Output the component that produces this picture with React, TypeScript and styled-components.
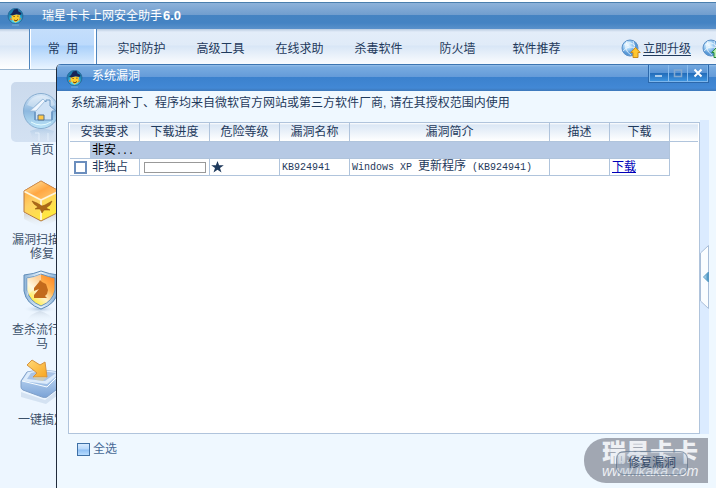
import React from "react";
import styled, { createGlobalStyle } from "styled-components";

const cjk = '"Liberation Sans", "Noto Sans CJK SC", sans-serif';
const ink = "#1f3a5c";
const line = "#b0c4dc";

const GlobalStyle = createGlobalStyle`
  * { box-sizing: border-box; }
  body { margin: 0; background: #fff; font: 12px/14px ${cjk}; color: ${ink}; overflow: hidden; }
  button, input { font: inherit; color: inherit; margin: 0; padding: 0; }
`;

const Page = styled.div`
  position: relative;
  min-height: 100vh;
  padding-top: 2px;
  overflow: hidden;
  display: flex;
  flex-direction: column;
  svg { display: block; flex: none; }
`;

const TitleBar = styled.header`
  height: 27px;
  display: flex;
  align-items: center;
  gap: 18px;
  padding-left: 7px;
  color: #fff;
  border-top: 1px solid #4a7fae;
  background: linear-gradient(#8db2da 0, #709dce 12px, #4583c2 12px, #4483c3 20px, #5a91cb 100%);
`;

const TitleText = styled.h1`
  margin: 0;
  font-size: 12px;
  line-height: 20px;
  font-weight: 400;
  b { font-size: 13px; padding-left: 1px; }
`;

const Nav = styled.nav`
  height: 41px;
  flex: none;
  display: flex;
  align-items: stretch;
  padding-left: 29px;
  border-bottom: 1px solid #9ab6d0;
  background: linear-gradient(#b9cbe0 0, #e3edf9 3px, #e0ebf8 16px, #d8e6f6 17px, #f1f6fc 30px, #fff 100%);
`;

const Tab = styled.button<{ $active?: boolean }>`
  width: ${(p) => (p.$active ? 68 : 79)}px;
  margin-right: ${(p) => (p.$active ? 5 : 0)}px;
  flex: none;
  border: solid #4f85bd;
  border-width: ${(p) => (p.$active ? "0 1px" : "0")};
  box-shadow: ${(p) => (p.$active ? "inset 1px 0 #fff, inset -2px 0 #fff" : "none")};
  background: ${(p) => (p.$active ? "linear-gradient(#c4defb 0, #bcdafc 16px, #a9d0fa 17px, #e9f4ff 100%)" : "transparent")};
  white-space: pre;
`;

const Updates = styled.div`
  flex: none;
  display: flex;
  align-items: center;
  gap: 2px;
  margin-left: 45px;
`;

const UpgradeLink = styled.a`
  color: ${ink};
  text-underline-offset: 2px;
  margin-right: 9px;
`;

const Sidebar = styled.aside`
  flex: 1;
  background: #edf6ff;
  padding: 12px 0 0 11px;
`;

const SideItem = styled.button`
  display: flex;
  flex-direction: column;
  gap: 1px;
  width: 62px;
  height: 90px;
  border: 0;
  background: none;
  color: #3c5069;
  text-align: center;
`;

const SideIcon = styled.span<{ $active?: boolean }>`
  width: 62px;
  height: 60px;
  border-radius: 5px;
  background: ${(p) => (p.$active ? "linear-gradient(#cbdaed, #d3e1f2)" : "none")};
`;

const SideLabel = styled.span`
  width: 62px;
`;

const Dialog = styled.section`
  position: absolute;
  left: 56px;
  top: 64px;
  right: 0;
  bottom: 0;
  display: flex;
  flex-direction: column;
  background: #eff8ff;
  border-left: 1px solid #202b3c;
  border-top-left-radius: 5px;
  overflow: hidden;
`;

const DialogBar = styled.header`
  height: 27px;
  flex: none;
  display: flex;
  justify-content: space-between;
  color: #fff;
  padding: 0 7px 0 9px;
  border-top: 1px solid #3d75b1;
  background: linear-gradient(#95bfe9 0, #78abe0 2px, #649bd9 12px, #3b81cd 12px, #4288d5 23px, #3d78ba 100%);
`;

const DialogTitle = styled.div`
  display: flex;
  align-items: center;
  gap: 9px;
  h2 { margin: 0; font-size: 12px; font-weight: 400; line-height: 20px; padding-bottom: 4px; }
`;

const WindowButtons = styled.div`
  display: flex;
  height: 18px;
  padding: 0 1px 1px;
  background: #7cb6ec;
  border: 1px solid #2c68ab;
  border-top: 0;
`;

const WindowButton = styled.button`
  width: 19px;
  border: solid #8abcec;
  border-width: 0 1px 0 0;
  display: grid;
  place-items: center;
  background: linear-gradient(#74a9df 0, #5793d5 8px, #226bb8 8px, #3c93df 100%);
  &:last-child { border-right: 0; }
`;

const Notice = styled.p`
  margin: 0;
  padding: 5px 0 10px 14px;
  line-height: 14px;
  white-space: nowrap;
`;

const Main = styled.div`
  flex: 1;
  display: flex;
  padding: 0 7px 0 11px;
`;

const TableBox = styled.div`
  flex: 1;
  margin-top: 2px;
  padding: 0 1px;
  background: #fff;
  border: 1px solid ${line};
`;

const Table = styled.table`
  width: 100%;
  table-layout: fixed;
  border-collapse: separate;
  border-spacing: 0;
  line-height: 14px;
  th, td { padding: 0; border: solid ${line}; border-width: 0 1px 1px 0; font-weight: 400; white-space: nowrap; overflow: hidden; }
  th { height: 19px; background: linear-gradient(#fff 0, #dbe7f5 2px, #fff 100%); }
  th:last-child { border-right: 0; }
  td { height: 17px; }
  td:last-child { border: 0; }
`;

const Col = styled.col<{ $w?: number }>`
  width: ${(p) => (p.$w ? `${p.$w}px` : "auto")};
`;

const GroupName = styled.div`
  margin-left: 20px;
  height: 16px;
  line-height: 16px;
  padding-left: 2px;
  background: #b6c9e4;
  color: #000;
`;

const CheckLabel = styled.label`
  display: flex;
  align-items: center;
  gap: 5px;
  padding-left: 4px;
`;

const Check = styled.input<{ $filled?: boolean }>`
  appearance: none;
  flex: none;
  width: 13px;
  height: 13px;
  border: ${(p) => (p.$filled ? "1px solid #3e70a6" : "2px solid #6b8ebd")};
  background: ${(p) => (p.$filled ? "linear-gradient(#d7ebff 0, #b7d8fb 5px, #8fc0f4 6px, #b7dcff 100%)" : "#fff")};
`;

const Progress = styled.div`
  width: 62px;
  height: 11px;
  margin-left: 4px;
  border: 1px solid #999;
  background: #fff;
`;

const Text = styled.div`
  padding-left: 2px;
`;

const Mono = styled.span`
  font: 10px/14px "Liberation Mono", monospace;
`;

const DownloadLink = styled.a`
  color: #0000b8;
  padding-left: 2px;
`;

const Strip = styled.div`
  width: 9px;
  display: flex;
  align-items: center;
  background: #dbebff;
`;

const Handle = styled.button`
  width: 9px;
  height: 64px;
  border: 0;
  background: none;
`;

const Footer = styled.footer`
  position: relative;
  height: 54px;
  flex: none;
  display: flex;
  align-items: flex-start;
  justify-content: space-between;
  padding: 8px 28px 0 16px;
`;

const SelectAll = styled(CheckLabel)`
  gap: 3px;
  color: #466995;
`;

const RepairButton = styled.button`
  position: relative;
  z-index: 1;
  width: 72px;
  height: 24px;
  margin-top: 9px;
  border: 1px solid rgba(75, 100, 128, 0.55);
  border-radius: 8px;
  background: linear-gradient(rgba(205, 215, 228, 0.25), rgba(115, 135, 160, 0.3) 50%, rgba(190, 205, 222, 0.3));
  color: #364b69;
`;

const Watermark = styled.div`
  position: absolute;
  right: 8px;
  bottom: 5px;
  width: 124px;
  height: 45px;
  padding: 5px 0 0 18px;
  border-radius: 22px 0 0 22px;
  background: #a1a7b2;
  color: #eef0f4;
  pointer-events: none;
  white-space: nowrap;
  strong { display: block; font-size: 24px; line-height: 20px; font-weight: 900; }
  em { display: block; font-size: 14px; line-height: 16px; }
`;

const AppLogo = ({ id }: { id: string }) => (
  <svg width="17" height="20" viewBox="0 0 17 20" aria-hidden="true">
    <defs>
      <radialGradient id={id} cx="50%" cy="72%">
        <stop offset="0" stopColor="#8ff5ff" />
        <stop offset=".6" stopColor="#3fc3e2" />
        <stop offset="1" stopColor="#1b7fae" />
      </radialGradient>
    </defs>
    <circle cx="8.500" cy="10" r="7.500" fill={`url(#${id})`} stroke="#2a6d9c" />
    <path d="M4.500 8.500l.3 4.500 3.700 3.500 3.800-2.500.7-5.500z" fill="#ffcb2b" />
    <path d="M5 7l2-3.500 3.500-.7 1 2.700 3 1.500-1 2-4-.8-4 1.300-2.500-.8z" fill="#172457" />
    <path d="M6.500 10.500h1.200M10.300 10.200h1.200M7 14l2 .8 2-1.300" stroke="#6d4510" fill="none" />
    <path d="M4.500 12l-1.500 1 2 1M12.500 12l1.200.8-1.600 1.200" stroke="#eb7a23" fill="none" />
    <path d="M5 19h7" stroke="#a5d4ec" opacity=".5" />
  </svg>
);

const GlobeIcon = ({ id, green }: { id: string; green?: boolean }) => (
  <svg width="20" height="20" viewBox="0 0 20 20" aria-hidden="true">
    <defs>
      <radialGradient id={id} cx="36%" cy="32%">
        <stop offset="0" stopColor="#f8fdff" />
        <stop offset=".5" stopColor="#a9d5f7" />
        <stop offset="1" stopColor="#5697d6" />
      </radialGradient>
    </defs>
    <circle cx="9" cy="9" r="8" fill={`url(#${id})`} stroke="#5f92c8" />
    <path d="M3 6q6-5 11 1M2 12q6-7 14-2M6 2q-4 9 4 14M12 2q3 7-1 12" stroke="#fff" opacity=".7" fill="none" />
    <path d="M14.500 8.500l4.700 5H17v5h-5v-5H9.800z" fill={green ? "#bdf0b5" : "#ffc62e"} stroke={green ? "#21863b" : "#c98a1c"} />
  </svg>
);

const HomeIcon = () => (
  <svg width="62" height="60" viewBox="0 0 62 60" aria-hidden="true">
    <defs>
      <linearGradient id="home" x2="0" y2="1">
        <stop stopColor="#d6e7f8" /><stop offset=".5" stopColor="#8db8df" /><stop offset="1" stopColor="#bce5f8" />
      </linearGradient>
      <linearGradient id="homeFade" x2="0" y2="1">
        <stop stopColor="#a5c5e3" stopOpacity=".7" /><stop offset="1" stopColor="#d0dff0" stopOpacity="0" />
      </linearGradient>
    </defs>
    <path d="M19 49q11-5 24 0l-3 9H22z" fill="url(#homeFade)" />
    <path d="M24 51h4v8M37 51v8" stroke="#edf6ff" opacity=".7" fill="none" />
    <circle cx="30" cy="29" r="17.500" fill="url(#home)" stroke="#87add0" />
    <path d="M16 23a15 15 0 0 1 28 0q-14 7-28 0z" fill="#fff" opacity=".35" />
    <path d="M19 29l13-12 3 3v-2h4v6l6 5h-4v9H24V29z" fill="#cfe2f6" stroke="#6f9ac5" />
    <path d="M19 29l13-12 2 2-9 10z" fill="#f0f7ff" stroke="#a4c2df" />
    <path d="M24 38v-8M41 38v-8" stroke="#6a96c3" strokeWidth="1.500" />
    <path d="M27 38v-5h6v5z" fill="#ffc849" stroke="#56708c" />
    <path d="M20 40q10 6 20 0" stroke="#e4fbff" fill="none" />
  </svg>
);

const CubeIcon = () => (
  <svg width="62" height="60" viewBox="0 0 62 60" aria-hidden="true">
    <defs>
      <linearGradient id="cubeTop" x2="1" y2="1"><stop stopColor="#fff0b0" /><stop offset=".5" stopColor="#ffa743" /><stop offset="1" stopColor="#ffd27b" /></linearGradient>
      <linearGradient id="cubeSide" x2=".6" y2="1"><stop stopColor="#ff9a34" /><stop offset=".5" stopColor="#ffd065" /><stop offset="1" stopColor="#ffec3b" /></linearGradient>
      <linearGradient id="cubeFade" x2="0" y2="1"><stop stopColor="#c9c8c3" stopOpacity=".75" /><stop offset="1" stopColor="#edf6ff" stopOpacity="0" /></linearGradient>
    </defs>
    <path d="M13 41l17 8 18-8v6l-18 9-17-9z" fill="url(#cubeFade)" />
    <path d="M30 9l18 10v21l-18 9-17-9V19z" fill="url(#cubeSide)" stroke="#b67a43" />
    <path d="M30 9l18 10-18 9-17-9z" fill="url(#cubeTop)" stroke="#c98245" strokeWidth=".6" />
    <path d="M13.500 19.500L30 28l17.500-8.500M30 28v20" stroke="#fff6dc" strokeWidth="1.800" fill="none" />
    <path d="M21 29l5 2 5 3 3-1 7-4-2 4-4 3 4 2-6 0-2 3-2-4-5 0 3-2-4-3z" fill="#ae6917" stroke="#8b4e0d" strokeWidth=".5" />
  </svg>
);

const ShieldIcon = () => (
  <svg width="62" height="60" viewBox="0 0 62 60" aria-hidden="true">
    <defs>
      <linearGradient id="rim"><stop stopColor="#8fb4d8" /><stop offset=".5" stopColor="#eaf6ff" /><stop offset="1" stopColor="#7aa6d0" /></linearGradient>
      <linearGradient id="shield" x1="1" x2=".2" y2="1"><stop stopColor="#ff7d19" /><stop offset=".4" stopColor="#ffb14e" /><stop offset=".65" stopColor="#fff2c9" /><stop offset="1" stopColor="#ffeb16" /></linearGradient>
      <radialGradient id="shieldShade"><stop stopColor="#a7bfd9" /><stop offset="1" stopColor="#edf6ff" stopOpacity="0" /></radialGradient>
      <linearGradient id="shieldFade" x2="0" y2="1"><stop stopColor="#cfdbe8" /><stop offset="1" stopColor="#edf6ff" stopOpacity="0" /></linearGradient>
    </defs>
    <ellipse cx="29" cy="47" rx="17" ry="4" fill="url(#shieldShade)" />
    <path d="M15 59q5-8 14-10 9 2 14 10z" fill="url(#shieldFade)" />
    <path d="M13 13q10-1 17-4 8 3 17 4v16q-2 13-17 18-15-5-17-18z" fill="url(#rim)" stroke="#5f8cb8" />
    <path d="M16 16q8-1 14-4 8 3 14 4v12q-2 11-14 16-12-5-14-16z" fill="url(#shield)" stroke="#6893bb" />
    <path d="M16 16q8-1 14-4v8L16 34z" fill="#fff" opacity=".45" />
    <path d="M23 36v-3l5-6-5 2v-3l5-6 1-2 2 2 4 2 2 6-1 4-2 2 2 2z" fill="#c36a1c" />
  </svg>
);

const BoxIcon = () => (
  <svg width="62" height="60" viewBox="0 0 62 60" aria-hidden="true">
    <defs>
      <linearGradient id="boxFront" x2="0" y2="1"><stop stopColor="#c9e0f8" /><stop offset="1" stopColor="#7ba3d6" /></linearGradient>
      <linearGradient id="arrow" x2="1" y2="1"><stop stopColor="#ffd97a" /><stop offset="1" stopColor="#f8a51f" /></linearGradient>
    </defs>
    <path d="M10 40l24 8 17-13v5L35 52 10 45z" fill="#c3d5ea" opacity=".6" />
    <path d="M10 29l6-9 12-2 22 2v14L36 45q-2 1-5 0L12 38q-2-1-2-3z" fill="url(#boxFront)" stroke="#7f9fc8" />
    <path d="M11 29l6-9 12-2 21 2-14 12z" fill="#dcebfb" />
    <path d="M16 27l4-6 10-2 15 2-11 8z" fill="#a9c3e6" />
    <path d="M11 29l25 6M36 35l14-14" stroke="#f8fdff" fill="none" />
    <path d="M16 13l5-5 8 5 5-3 2 15H22l4-4z" fill="url(#arrow)" stroke="#d49342" />
    <path d="M22 25h14l-4 4-7-1z" fill="#d8cda6" opacity=".7" />
  </svg>
);

const sideItems = [
  { label: "首页", icon: <HomeIcon />, active: true },
  { label: "漏洞扫描与修复", icon: <CubeIcon /> },
  { label: "查杀流行木马", icon: <ShieldIcon /> },
  { label: "一键搞定", icon: <BoxIcon /> },
];

const tabs = ["实时防护", "高级工具", "在线求助", "杀毒软件", "防火墙", "软件推荐"];
const columns = ["安装要求", "下载进度", "危险等级", "漏洞名称", "漏洞简介", "描述", "下载", ""];
const widths = [70, 70, 70, 70, 200, 60, 60, undefined];

export default function App() {
  return (
    <Page>
      <GlobalStyle />
      <TitleBar>
        <AppLogo id="logoMain" />
        <TitleText>瑞星卡卡上网安全助手<b>6.0</b></TitleText>
      </TitleBar>
      <Nav>
        <Tab $active>常  用</Tab>
        {tabs.map((t) => <Tab key={t}>{t}</Tab>)}
        <Updates>
          <GlobeIcon id="globeA" />
          <UpgradeLink href="#upgrade">立即升级</UpgradeLink>
          <GlobeIcon id="globeB" green />
        </Updates>
      </Nav>
      <Sidebar>
        {sideItems.map((s) => (
          <SideItem key={s.label}>
            <SideIcon $active={s.active}>{s.icon}</SideIcon>
            <SideLabel>{s.label}</SideLabel>
          </SideItem>
        ))}
      </Sidebar>
      <Dialog role="dialog" aria-labelledby="dialog-title">
        <DialogBar>
          <DialogTitle>
            <AppLogo id="logoDialog" />
            <h2 id="dialog-title">系统漏洞</h2>
          </DialogTitle>
          <WindowButtons>
            <WindowButton aria-label="最小化">
              <svg width="10" height="10"><path d="M1 8h7" stroke="#a9cbea" strokeWidth="2" /></svg>
            </WindowButton>
            <WindowButton aria-label="最大化" disabled>
              <svg width="10" height="10"><path d="M1.500 2h7v6.500h-7z" stroke="#84a9cf" strokeWidth="1.500" fill="none" /></svg>
            </WindowButton>
            <WindowButton aria-label="关闭">
              <svg width="10" height="10"><path d="M1.500 1.500l7 7m0-7l-7 7" stroke="#fff" strokeWidth="2" /></svg>
            </WindowButton>
          </WindowButtons>
        </DialogBar>
        <Notice>系统漏洞补丁、程序均来自微软官方网站或第三方软件厂商, 请在其授权范围内使用</Notice>
        <Main>
          <TableBox>
            <Table>
              <colgroup>{widths.map((w, i) => <Col key={i} $w={w} />)}</colgroup>
              <thead>
                <tr>{columns.map((c, i) => <th key={i} scope="col">{c}</th>)}</tr>
              </thead>
              <tbody>
                <tr>
                  <td colSpan={7}><GroupName>非安<Mono>...</Mono></GroupName></td>
                  <td />
                </tr>
                <tr>
                  <td><CheckLabel><Check type="checkbox" />非独占</CheckLabel></td>
                  <td><Progress role="progressbar" aria-valuenow={0} aria-label="下载进度" /></td>
                  <td>
                    <svg width="15" height="14" viewBox="0 0 15 14" role="img" aria-label="一星">
                      <path d="M7.500 1l1.600 4.200h4.700L10 7.900l1.500 4.600-4-2.800-4 2.800L5 7.900 1.200 5.200h4.700z" fill={ink} />
                    </svg>
                  </td>
                  <td><Text><Mono>KB924941</Mono></Text></td>
                  <td><Text><Mono>Windows XP </Mono>更新程序<Mono> (KB924941)</Mono></Text></td>
                  <td />
                  <td><DownloadLink href="#KB924941">下载</DownloadLink></td>
                  <td />
                </tr>
              </tbody>
            </Table>
          </TableBox>
          <Strip>
            <Handle aria-label="展开">
              <svg width="9" height="64" viewBox="0 0 9 64">
                <defs><linearGradient id="fold"><stop stopColor="#daf4ff" /><stop offset="1" stopColor="#3283b8" /></linearGradient></defs>
                <path d="M8.500.5L.5 8v48l8 7.500z" fill="#fafdff" stroke="#a9bed8" />
                <path d="M8.500 27L3.500 32l5 5z" fill="url(#fold)" stroke="#5799c2" />
              </svg>
            </Handle>
          </Strip>
        </Main>
        <Footer>
          <SelectAll><Check type="checkbox" $filled />全选</SelectAll>
          <RepairButton>修复漏洞</RepairButton>
          <Watermark>
            <strong>瑞星卡卡</strong>
            <em>www.ikaka.com</em>
          </Watermark>
        </Footer>
      </Dialog>
    </Page>
  );
}
